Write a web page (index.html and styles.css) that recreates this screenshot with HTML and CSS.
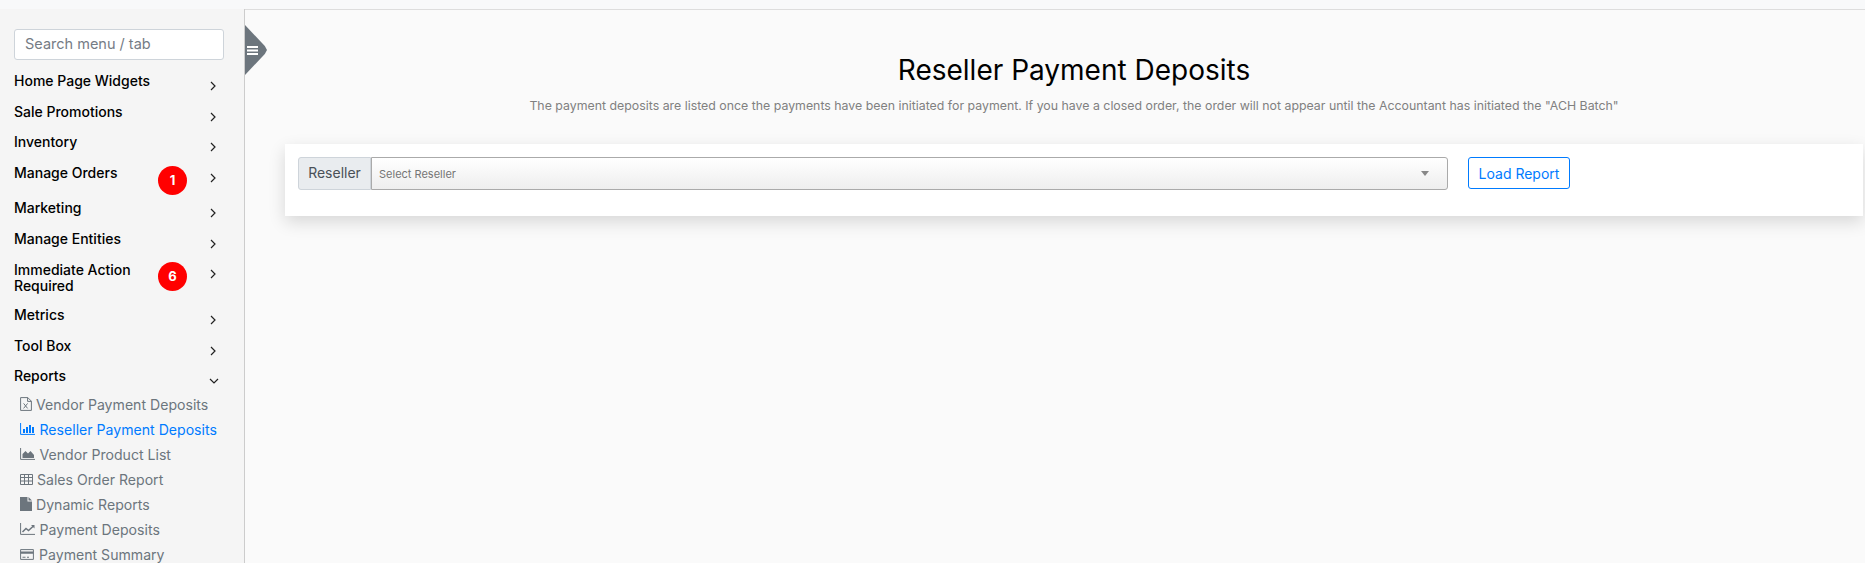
FILE: index.html
```html
<!DOCTYPE html>
<html lang="en">
<head>
  <meta charset="UTF-8">
  <title>Reseller Payment Deposits</title>
  <link rel="stylesheet" href="styles.css">
</head>
<body>
  <div class="topstrip"></div>
  <div class="page">
    <aside class="sidebar">
      <input class="search" type="text" placeholder="Search menu / tab">

      <ul class="menu">
        <li class="item"><span class="name">Home Page Widgets</span><svg class="chev" viewBox="0 0 8 10"><path d="M2 1l4 4-4 4"/></svg></li>
        <li class="item"><span class="name">Sale Promotions</span><svg class="chev" viewBox="0 0 8 10"><path d="M2 1l4 4-4 4"/></svg></li>
        <li class="item"><span class="name">Inventory</span><svg class="chev" viewBox="0 0 8 10"><path d="M2 1l4 4-4 4"/></svg></li>
        <li class="item has-badge"><span class="name">Manage Orders</span><span class="badge">1</span><svg class="chev" viewBox="0 0 8 10"><path d="M2 1l4 4-4 4"/></svg></li>
        <li class="item"><span class="name">Marketing</span><svg class="chev" viewBox="0 0 8 10"><path d="M2 1l4 4-4 4"/></svg></li>
        <li class="item"><span class="name">Manage Entities</span><svg class="chev" viewBox="0 0 8 10"><path d="M2 1l4 4-4 4"/></svg></li>
        <li class="item has-badge two-line"><span class="name">Immediate Action Required</span><span class="badge">6</span><svg class="chev" viewBox="0 0 8 10"><path d="M2 1l4 4-4 4"/></svg></li>
        <li class="item"><span class="name">Metrics</span><svg class="chev" viewBox="0 0 8 10"><path d="M2 1l4 4-4 4"/></svg></li>
        <li class="item short"><span class="name">Tool Box</span><svg class="chev" viewBox="0 0 8 10"><path d="M2 1l4 4-4 4"/></svg></li>
        <li class="item open"><span class="name">Reports</span><svg class="chev down" viewBox="0 0 10 8"><path d="M1 2l4 4 4-4"/></svg></li>
      </ul>

      <ul class="submenu">
        <li class="sub">
          <svg class="ico" viewBox="0 0 12 14"><path class="line" d="M.6.6h7.200l3.600 3.600v9.200H.6zM7.600.6v3.800h3.800"/><path class="line" d="M3.600 6.400l4 5M7.600 6.400l-4 5"/></svg>
          Vendor Payment Deposits
        </li>
        <li class="sub active">
          <svg class="ico wide" viewBox="0 0 15 12"><path class="line" d="M.6 0v11.400H15"/><path class="fill" d="M3 6h2v4H3zM6 4h2v6H6zM9 2h2v8H9zM12 4h2v6h-2z"/></svg>
          <span class="gap">Reseller Payment Deposits</span>
        </li>
        <li class="sub">
          <svg class="ico wide" viewBox="0 0 15 12"><path class="line" d="M.6 0v11.400H15"/><path class="fill" d="M2.500 10V6l3-3 2.500 2.500L10.500 3l3.500 4v3z"/></svg>
          <span class="gap">Vendor Product List</span>
        </li>
        <li class="sub">
          <svg class="ico table" viewBox="0 0 13 11"><path class="line" d="M.5.5h12v10H.5zM.5 3.500h12M.5 7h12M4.500 .5v10M8.500 .5v10"/></svg>
          Sales Order Report
        </li>
        <li class="sub">
          <svg class="ico" viewBox="0 0 12 14"><path class="fill" d="M0 0h7.500v4.500H12V14H0zM8.500 0L12 3.500H8.500z"/></svg>
          Dynamic Reports
        </li>
        <li class="sub">
          <svg class="ico wide" viewBox="0 0 15 12"><path class="line" d="M.6 0v11.400H15"/><path class="line thick" d="M2.500 9l3.500-3.500 2.500 2L13.500 3"/><path class="fill" d="M11 2h3.500v3.500z"/></svg>
          <span class="gap">Payment Deposits</span>
        </li>
        <li class="sub">
          <svg class="ico wide card-ico" viewBox="0 0 14 11"><path class="line" d="M.6.6h12.800v9.800H.6z"/><path class="fill" d="M.6 2.500h12.800v2.300H.6zM2.500 7.800h3v1h-3zM7 7.800h2v1H7z"/></svg>
          Payment Summary
        </li>
      </ul>
    </aside>

    <main class="content">
      <div class="toggle">
        <svg class="bars" viewBox="0 0 11 9"><path d="M0 0h11v2H0zM0 3.500h11v2H0zM0 7h11v2H0z"/></svg>
      </div>

      <h1 class="title">Reseller Payment Deposits</h1>
      <p class="lead">The payment deposits are listed once the payments have been initiated for payment. If you have a closed order, the order will not appear until the Accountant has initiated the "ACH Batch"</p>

      <section class="panel">
        <div class="input-group">
          <span class="addon">Reseller</span>
          <div class="picker">
            <span>Select Reseller</span>
            <i class="caret"></i>
          </div>
        </div>
        <button class="load">Load Report</button>
      </section>
    </main>
  </div>
</body>
</html>
```

FILE: styles.css
```css
* {
  box-sizing: border-box;
}
html, body {
  height: 100%;
}
body {
  margin: 0;
  height: 563px;
  overflow: hidden;
  font-family: Inter, "Liberation Sans", sans-serif;
  background: #fafafa;
  color: #000;
}
.topstrip {
  height: 9px;
  background: #f8f9fa;
}
.page {
  display: flex;
  height: 554px;
}

/* sidebar */
.sidebar {
  width: 245px;
  flex: none;
  padding: 20px 0 0 14px;
  background: #f5f5f5;
  border-right: 1px solid #ccc;
  overflow: hidden;
}
.search {
  display: block;
  width: 210px;
  height: 31px;
  padding: 0 10px 2px;
  font: 14.500px Inter, sans-serif;
  background: #fff;
  border: 1px solid #ced4da;
  border-radius: 3px;
}
.search::placeholder {
  color: #757c85;
  opacity: 1;
}
.menu, .submenu {
  list-style: none;
  margin: 0;
  padding: 0;
}
.menu {
  margin-top: 7px;
}
.item {
  display: flex;
  align-items: flex-start;
  width: 212px;
  height: 30.700px;
  padding-top: 6px;
  font-size: 14px;
  font-weight: 500;
  line-height: 16px;
  position: relative;
}
.item.has-badge {
  height: 35px;
}
.item.two-line {
  height: 46px;
  padding-top: 7px;
}
.item.short {
  height: 29.700px;
}
.name {
  width: 128px;
  white-space: nowrap;
}
.two-line .name {
  white-space: normal;
}
.badge {
  position: absolute;
  left: 144px;
  top: 7px;
  width: 29px;
  height: 29px;
  border-radius: 50%;
  background: #f00;
  color: #fff;
  font-size: 13px;
  font-weight: 700;
  text-align: center;
  line-height: 29px;
}
.chev {
  position: absolute;
  left: 195px;
  top: 14px;
  width: 8px;
  height: 10px;
  fill: none;
  stroke: #222;
  stroke-width: 1.200;
}
.chev.down {
  left: 195px;
  top: 15px;
  width: 10px;
  height: 8px;
}
.submenu {
  margin-top: -1px;
  padding-left: 6px;
}
.sub {
  display: flex;
  align-items: center;
  height: 25px;
  font-size: 14.100px;
  color: #6c757d;
  white-space: nowrap;
}
.sub.active {
  color: #007bff;
}
.ico {
  flex: none;
  width: 12px;
  height: 14px;
  margin-right: 4px;
}
.ico.wide {
  width: 15px;
  height: 12px;
}
.ico.table {
  width: 13px;
  height: 11px;
  margin-right: 4px;
}
.ico.card-ico {
  width: 14px;
  height: 11px;
  margin-right: 5px;
}
.gap {
  margin-left: 0.500px;
}
.line {
  fill: none;
  stroke: currentColor;
  stroke-width: 1;
}
.line.thick {
  stroke-width: 1.500;
}
.fill {
  fill: currentColor;
}

/* main area */
.content {
  flex: 1;
  padding: 0 2px 0 40px;
  position: relative;
  border-top: 1px solid #ddd;
  min-width: 0;
}
.toggle {
  position: absolute;
  left: 0;
  top: 15px;
  width: 22px;
  height: 50px;
  background: #6c757d;
  clip-path: polygon(0 0, 90% 42%, 100% 50%, 90% 58%, 0 100%);
  display: flex;
  align-items: center;
  padding-left: 2px;
}
.bars {
  width: 11px;
  height: 9px;
  fill: #fff;
}
.title {
  margin: 42px 0 0;
  font-size: 28px;
  font-weight: 400;
  line-height: 36px;
  text-align: center;
}
.lead {
  margin: 9px 0 0;
  font-size: 12.350px;
  line-height: 18px;
  color: #808080;
  text-align: center;
}
.panel {
  display: flex;
  align-items: flex-start;
  height: 72px;
  margin-top: 29px;
  padding: 13px;
  background: #fff;
  box-shadow: 0 6px 16px rgba(0, 0, 0, 0.14);
}
.input-group {
  display: flex;
  width: 1150px;
  height: 33px;
}
.addon {
  width: 73px;
  padding-top: 6px;
  font-size: 14px;
  text-align: center;
  color: #495057;
  background: #e9ecef;
  border: 1px solid #ced4da;
  border-radius: 3px 0 0 3px;
}
.picker {
  flex: 1;
  display: flex;
  align-items: center;
  justify-content: space-between;
  padding: 0 18px 0 7px;
  font-size: 11px;
  color: #757575;
  background: linear-gradient(#fff, #eee);
  border: 1px solid #aaa;
  border-radius: 0 3px 3px 0;
}
.caret {
  width: 0;
  height: 0;
  border: 4px solid transparent;
  border-top: 5px solid #888;
  border-bottom: 0;
}
.load {
  width: 102px;
  height: 32px;
  margin-left: 20px;
  font: 14px Inter, sans-serif;
  color: #007bff;
  background: #fff;
  border: 1px solid #007bff;
  border-radius: 3px;
}
```
